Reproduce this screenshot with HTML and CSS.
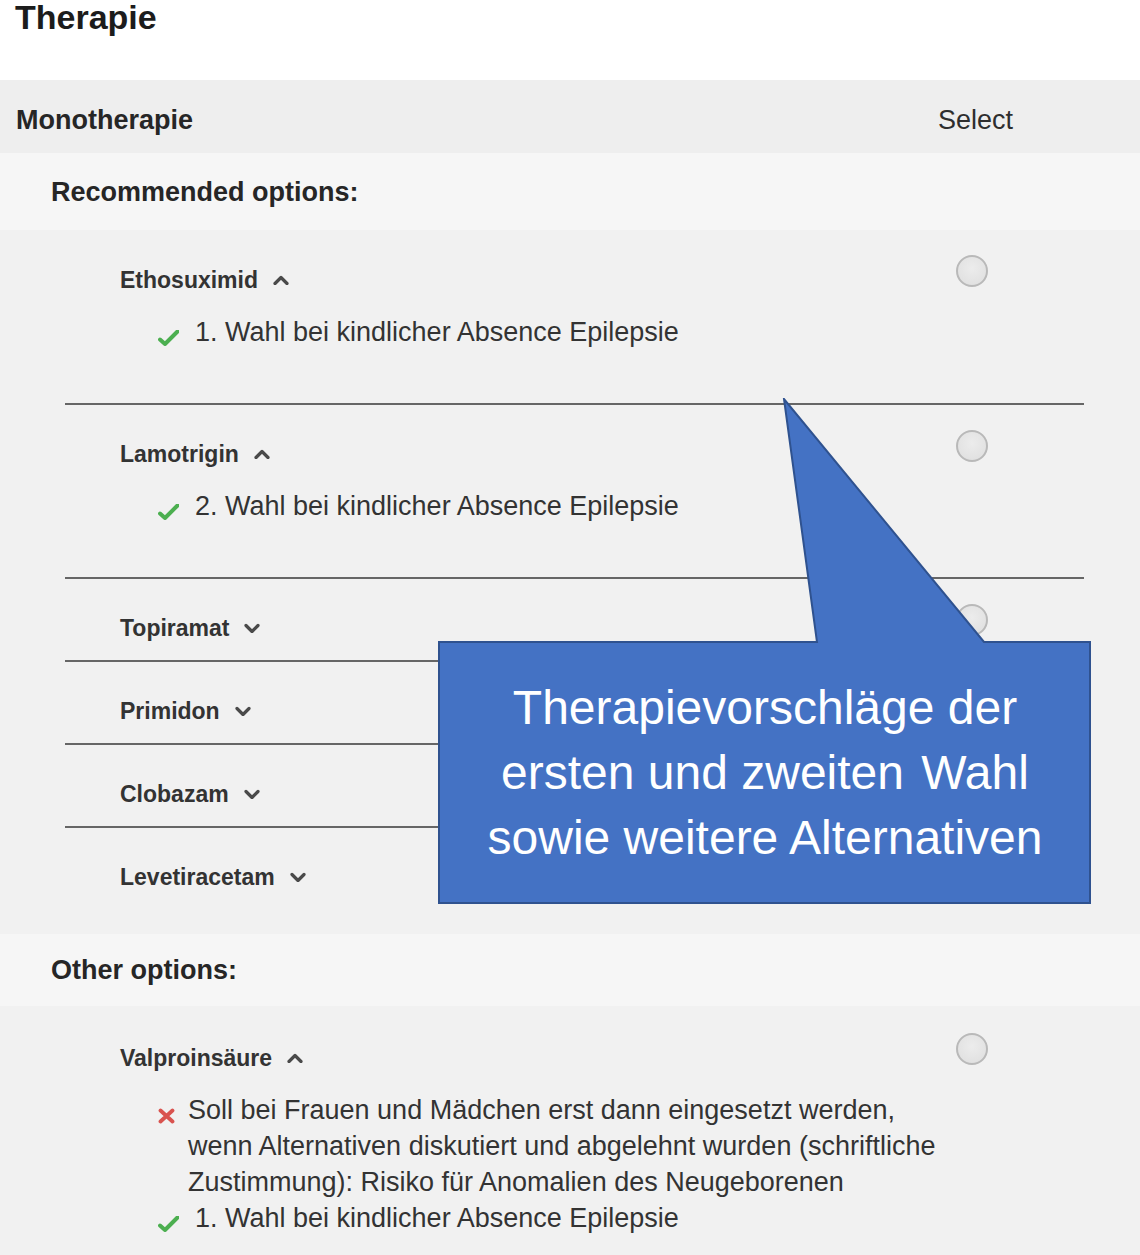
FILE: index.html
```html
<!DOCTYPE html>
<html lang="de">
<head>
<meta charset="utf-8">
<title>Therapie</title>
<link rel="stylesheet" href="styles.css">
</head>
<body>
<h1 class="title">Therapie</h1>

<div class="section-head">
  <span class="section-name">Monotherapie</span>
  <span class="select-label">Select</span>
</div>

<div class="group-head">Recommended options:</div>
<div class="options">
  <div class="option">
    <div class="option-main">
      <div class="option-name">Ethosuximid <svg class="chev" viewBox="0 0 16 10"><polyline points="2,8.5 8,2.5 14,8.5"/></svg></div>
      <ul class="notes">
        <li class="note"><span class="ico ico-good"><svg viewBox="0 0 21 16"><path d="M2 9.5 L7 14 L19.5 1.5"/></svg></span><span class="note-text">1. Wahl bei kindlicher Absence Epilepsie</span></li>
      </ul>
    </div>
    <span class="radio"></span>
  </div>
  <div class="option">
    <div class="option-main">
      <div class="option-name">Lamotrigin <svg class="chev" viewBox="0 0 16 10"><polyline points="2,8.5 8,2.5 14,8.5"/></svg></div>
      <ul class="notes">
        <li class="note"><span class="ico ico-good"><svg viewBox="0 0 21 16"><path d="M2 9.5 L7 14 L19.5 1.5"/></svg></span><span class="note-text">2. Wahl bei kindlicher Absence Epilepsie</span></li>
      </ul>
    </div>
    <span class="radio"></span>
  </div>
  <div class="option">
    <div class="option-main">
      <div class="option-name">Topiramat <svg class="chev" viewBox="0 0 16 10"><polyline points="2,2.5 8,8.5 14,2.5"/></svg></div>
    </div>
    <span class="radio"></span>
  </div>
  <div class="option">
    <div class="option-main">
      <div class="option-name">Primidon <svg class="chev" viewBox="0 0 16 10"><polyline points="2,2.5 8,8.5 14,2.5"/></svg></div>
    </div>
    <span class="radio"></span>
  </div>
  <div class="option">
    <div class="option-main">
      <div class="option-name">Clobazam <svg class="chev" viewBox="0 0 16 10"><polyline points="2,2.5 8,8.5 14,2.5"/></svg></div>
    </div>
    <span class="radio"></span>
  </div>
  <div class="option">
    <div class="option-main">
      <div class="option-name">Levetiracetam <svg class="chev" viewBox="0 0 16 10"><polyline points="2,2.5 8,8.5 14,2.5"/></svg></div>
    </div>
    <span class="radio"></span>
  </div>
</div>

<div class="group-head group-head-other">Other options:</div>
<div class="options options-other">
  <div class="option">
    <div class="option-main">
      <div class="option-name">Valproinsäure <svg class="chev" viewBox="0 0 16 10"><polyline points="2,8.5 8,2.5 14,8.5"/></svg></div>
      <ul class="notes">
        <li class="note"><span class="ico ico-bad"><svg viewBox="0 0 17 16"><path d="M2.5 2.5 L14.5 13.5 M14.5 2.5 L2.5 13.5"/></svg></span><span class="note-text note-wrap">Soll bei Frauen und Mädchen erst dann eingesetzt werden, wenn Alternativen diskutiert und abgelehnt wurden (schriftliche Zustimmung): Risiko für Anomalien des Neugeborenen</span></li>
        <li class="note"><span class="ico ico-good"><svg viewBox="0 0 21 16"><path d="M2 9.5 L7 14 L19.5 1.5"/></svg></span><span class="note-text">1. Wahl bei kindlicher Absence Epilepsie</span></li>
      </ul>
    </div>
    <span class="radio"></span>
  </div>
</div>

<div class="callout">
  <svg class="callout-shape" viewBox="0 0 654 507" width="654" height="507">
    <polygon points="1,244 379,244 346,1 546,244 652,244 652,505 1,505"/>
  </svg>
  <div class="callout-body">
    <p class="callout-text">Therapievorschläge der<br>ersten und zweiten <span class="wide-gap">Wahl</span><br>sowie weitere Alternativen</p>
  </div>
</div>
</body>
</html>
```

FILE: styles.css
```css
html, body {
  margin: 0;
  padding: 0;
  background: #ffffff;
}

body {
  position: relative;
  font-family: "Liberation Sans", Arial, sans-serif;
  color: #333333;
  width: 1140px;
  min-height: 1255px;
  overflow: hidden;
}

.title {
  margin: 0;
  padding: 0 0 46px 15px;
  font-size: 34px;
  line-height: 34px;
  font-weight: bold;
  color: #1c1c1c;
}

.section-head {
  display: flex;
  justify-content: space-between;
  align-items: center;
  background: #eeeeee;
  padding: 24px 127px 17px 16px;
  font-size: 27px;
  line-height: 32px;
}

.section-name {
  font-weight: bold;
  color: #262626;
}

.select-label {
  color: #2e2e2e;
}

.group-head {
  background: #f6f6f6;
  padding: 23px 51px 22px 51px;
  font-size: 27px;
  line-height: 32px;
  font-weight: bold;
  color: #262626;
}

.group-head-other {
  padding-top: 20px;
  padding-bottom: 20px;
}

.options {
  background: #f1f1f1;
  padding: 0 56px 25px 65px;
}

.options-other {
  padding-top: 2px;
  padding-bottom: 40px;
}

.option {
  display: flex;
  align-items: flex-start;
  padding: 34px 96px 17px 55px;
  border-bottom: 2px solid #666666;
}

.option:first-child {
  padding-top: 35px;
}

.option:last-child {
  border-bottom: none;
}

.option-main {
  flex: 1;
}

.option-name {
  display: flex;
  align-items: center;
  font-size: 23px;
  line-height: 30px;
  font-weight: bold;
  color: #333333;
}

.chev {
  width: 16px;
  height: 10px;
  margin-left: 15px;
  fill: none;
  stroke: #4a4a4a;
  stroke-width: 3.2;
  stroke-linecap: round;
  stroke-linejoin: round;
}

.notes {
  list-style: none;
  margin: 19px 0 36px 0;
  padding: 0 0 0 38px;
}

.options-other .notes {
  margin-bottom: 0;
}

.note {
  display: flex;
  align-items: flex-start;
  font-size: 27px;
  line-height: 36px;
  color: #333333;
}

.ico {
  display: flex;
  align-items: flex-end;
  height: 36px;
  box-sizing: border-box;
  padding-bottom: 4px;
  flex: none;
}

.ico svg {
  fill: none;
  stroke-linecap: round;
  stroke-linejoin: round;
}

.ico-good {
  width: 37px;
}

.ico-good svg {
  width: 21px;
  height: 16px;
  stroke: #4caf50;
  stroke-width: 4;
}

.ico-bad {
  width: 30px;
}

.ico-bad svg {
  width: 17px;
  height: 16px;
  stroke: #d9534f;
  stroke-width: 3.8;
}

.note-wrap {
  width: 765px;
}

.radio {
  flex: none;
  width: 32px;
  height: 32px;
  box-sizing: border-box;
  margin-top: -9px;
  border-radius: 50%;
  border: 2px solid #b9b9b9;
  background: radial-gradient(circle at 50% 40%, #ececec 0%, #e2e2e2 70%, #d8d8d8 100%);
}

.option:first-child .radio {
  margin-top: -10px;
}

.callout {
  position: absolute;
  left: 438px;
  top: 398px;
  width: 654px;
  height: 507px;
}

.callout-shape {
  position: absolute;
  left: 0;
  top: 0;
}

.callout-shape polygon {
  fill: #4472c4;
  stroke: #2f528f;
  stroke-width: 2;
  stroke-linejoin: miter;
}

.callout-body {
  position: absolute;
  left: 0;
  right: 0;
  top: 244px;
  bottom: 2px;
  display: flex;
  align-items: center;
  justify-content: center;
}

.callout-text {
  margin: 0;
  text-align: center;
  color: #ffffff;
  font-size: 48px;
  line-height: 65px;
}

.wide-gap {
  margin-left: 4px;
}
```
